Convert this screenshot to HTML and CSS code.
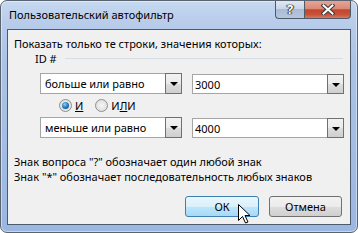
FILE: index.html
```html
<!DOCTYPE html>
<html>
<head>
<meta charset="utf-8">
<link rel="stylesheet" href="styles.css">
</head>
<body>
<div class="window">
  <div class="titlebar">
    <div class="title">Пользовательский автофильтр</div>
    <div class="caption-buttons">
      <div class="cbtn help">?</div>
      <div class="cbtn close">
        <svg width="14" height="11" viewBox="0 0 14 11"><path d="M2.5 1.5 L11.5 9.5 M11.5 1.5 L2.5 9.5" stroke="#3a3a3a" stroke-width="4" stroke-linecap="square"/><path d="M2.5 1.5 L11.5 9.5 M11.5 1.5 L2.5 9.5" stroke="#ffffff" stroke-width="2" stroke-linecap="square"/></svg>
      </div>
    </div>
  </div>
  <div class="client">
    <div class="prompt">Показать только те строки, значения которых:</div>
    <div class="group-head"><span class="group-label">ID #</span><span class="group-line"></span></div>
    <div class="row first-row">
      <div class="combo left"><span class="ctext">больше или равно</span><span class="drop"><span class="tri"></span></span></div>
      <div class="combo right"><span class="ctext">3000</span><span class="drop"><span class="tri"></span></span></div>
    </div>
    <div class="radios">
      <span class="radio"><span class="dot"></span></span><span class="rlabel"><u>И</u></span>
      <span class="radio"></span><span class="rlabel">И<u>Л</u>И</span>
    </div>
    <div class="row second-row">
      <div class="combo left"><span class="ctext">меньше или равно</span><span class="drop"><span class="tri"></span></span></div>
      <div class="combo right"><span class="ctext">4000</span><span class="drop"><span class="tri"></span></span></div>
    </div>
    <div class="hint first">Знак вопроса "?" обозначает один любой знак</div>
    <div class="hint">Знак "*" обозначает последовательность любых знаков</div>
    <div class="buttons">
      <div class="btn ok">ОК
        <svg class="cursor" width="13" height="20" viewBox="0 0 13 20"><path d="M0.5 0.5 L0.5 16.5 L4.5 12.5 L7.5 19 L10 18 L7 11.5 L12 11.5 Z" fill="#ffffff" stroke="#000000" stroke-width="1"/></svg>
      </div>
      <div class="btn cancel">Отмена</div>
    </div>
  </div>
</div>
</body>
</html>
```
FILE: styles.css
```css
html, body {
  margin: 0;
  padding: 0;
  background: #ffffff;
}
body {
  font-family: "Noto Sans", "Open Sans", sans-serif;
  font-size: 11px;
  line-height: 15px;
  color: #000;
}
.window {
  width: 358px;
  height: 233px;
  box-sizing: border-box;
  border: 1px solid #5a6470;
  border-radius: 7px;
  background: linear-gradient(180deg, #c6d9f0 0px, #b9cdeb 20px, #abc3e6 60px, #a3bde4 140px, #9bb6e0 233px);
  display: flex;
  flex-direction: column;
  padding: 0 6px 7px 6px;
  box-shadow: inset 0 0 0 1px rgba(255,255,255,0.45);
}
.titlebar {
  height: 28px;
  display: flex;
  justify-content: space-between;
  align-items: flex-start;
}
.title {
  margin-top: 6px;
  margin-left: 2px;
  color: #000;
}
.caption-buttons {
  display: flex;
}
.cbtn {
  height: 17px;
  border: 1px solid #4d5a6a;
  border-top: none;
  display: flex;
  align-items: center;
  justify-content: center;
}
.help {
  width: 28px;
  border-right: none;
  border-bottom-left-radius: 4px;
  background: linear-gradient(180deg, #e0e8f3 0%, #c9d6e8 45%, #abbdd6 50%, #b5c7de 100%);
  color: #fff;
  font-weight: bold;
  font-size: 13px;
  text-shadow: 0 0 1px #222, 0 0 1px #222, 1px 0 1px #333, -1px 0 1px #333;
}
.close {
  width: 45px;
  border-bottom-right-radius: 4px;
  background: linear-gradient(180deg, #e8a493 0%, #d98a77 45%, #c5442c 52%, #c8523a 80%, #d77a60 100%);
}
.client {
  flex: 1;
  border: 1px solid #4c5a6b;
  background: #f0f0f0;
  display: flex;
  flex-direction: column;
  padding: 0 6px 0 6px;
}
.prompt {
  margin-top: 6px;
}
.group-head {
  display: flex;
  align-items: center;
  margin-left: 21px;
  height: 15px;
}
.group-line {
  flex: 1;
  height: 1px;
  background: #d5dfe5;
  margin-left: 8px;
  margin-right: 1px;
}
.row {
  display: flex;
  align-items: flex-start;
  margin-left: 26px;
  gap: 10px;
}
.first-row { margin-top: 7px; }
.second-row { margin-top: 3px; }
.combo {
  height: 21px;
  box-sizing: border-box;
  border: 1px solid #a5a5a5;
  background: #fff;
  display: flex;
  align-items: center;
}
.combo.left { width: 142px; }
.combo.left .ctext { padding-left: 4px; }
.combo.right { width: 152px; height: 20px; margin-top: 1px; }
.combo.right .ctext { padding-left: 2px; }
.ctext {
  flex: 1;
}
.drop {
  width: 15px;
  align-self: stretch;
  border: 1px solid #707070;
  margin: -1px -1px -1px 0;
  background: linear-gradient(180deg, #f2f2f2 0%, #ebebeb 50%, #dddddd 51%, #cfcfcf 100%);
  display: flex;
  align-items: center;
  justify-content: center;
}
.tri {
  width: 0;
  height: 0;
  border-left: 4px solid transparent;
  border-right: 4px solid transparent;
  border-top: 4px solid #000;
  margin-top: 1px;
}
.radios {
  display: flex;
  align-items: center;
  margin-left: 45px;
  margin-top: 3px;
  height: 17px;
}
.radio {
  width: 11px;
  height: 11px;
  border-radius: 50%;
  border: 1px solid #8e8f8f;
  background: radial-gradient(circle at 50% 50%, #f4f4f4 0%, #e1e1e1 70%, #cfcfcf 100%);
  display: flex;
  align-items: center;
  justify-content: center;
}
.dot {
  width: 7px;
  height: 7px;
  border-radius: 50%;
  background: radial-gradient(circle at 40% 35%, #8cd1f5 0%, #1a73b8 55%, #0d4e8a 100%);
}
.rlabel {
  margin-left: 3px;
  margin-right: 12px;
}
.hint.first {
  margin-top: 16px;
}
.buttons {
  display: flex;
  justify-content: flex-end;
  gap: 10px;
  margin-top: 12px;
  margin-right: 2px;
}
.btn {
  width: 72px;
  height: 19px;
  border-radius: 3px;
  display: flex;
  align-items: center;
  justify-content: center;
  position: relative;
}
.ok {
  width: 72px;
  border: 1px solid #3c7fb1;
  background: linear-gradient(180deg, #eaf6fd 0%, #d9f0fc 50%, #bee6fd 51%, #a7d9f5 100%);
}
.cancel {
  width: 71px;
  border: 1px solid #707070;
  background: linear-gradient(180deg, #f2f2f2 0%, #ebebeb 50%, #dddddd 51%, #cfcfcf 100%);
}
.cursor {
  position: absolute;
  left: 52px;
  top: 7px;
}
```
